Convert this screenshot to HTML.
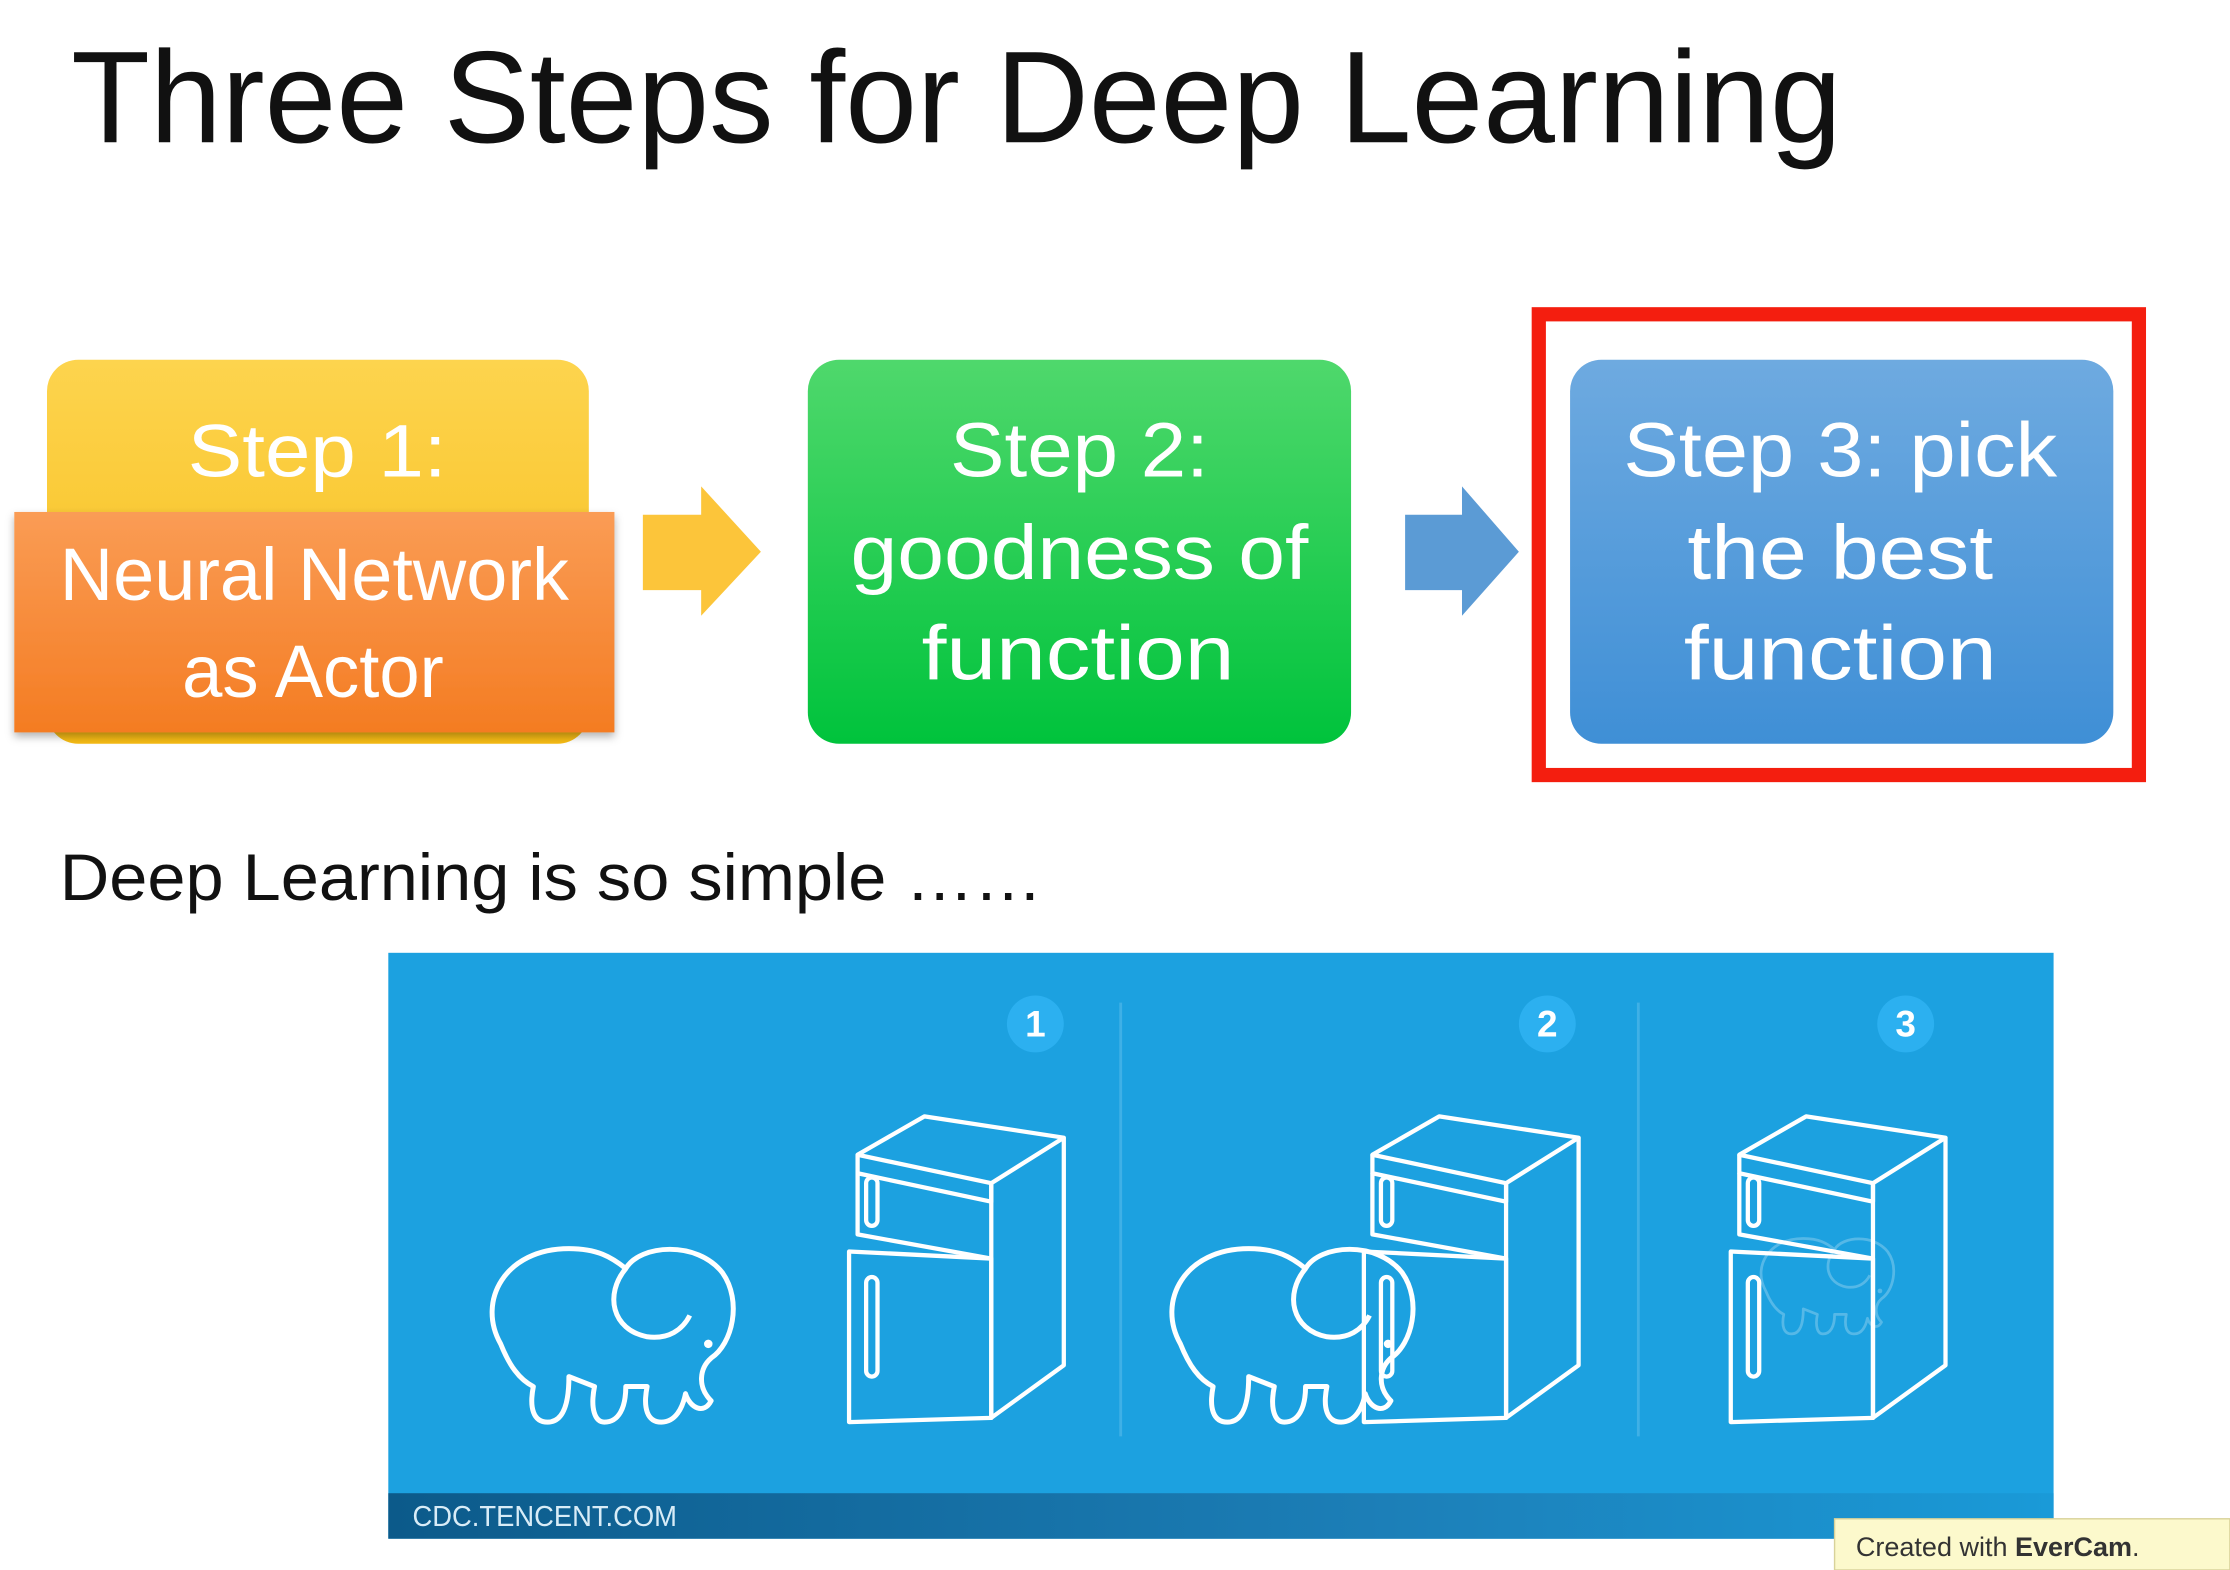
<!DOCTYPE html>
<html><head><meta charset="utf-8"><style>
html,body{margin:0;padding:0;background:#fff;width:2230px;height:1570px;overflow:hidden}
svg{display:block}
text{font-family:"Liberation Sans",sans-serif}
</style></head><body>
<svg width="2230" height="1570" viewBox="0 0 1568 1104" xmlns="http://www.w3.org/2000/svg">
<defs>
<linearGradient id="gy" x1="0" y1="0" x2="0" y2="1"><stop offset="0" stop-color="#fdd44e"/><stop offset="1" stop-color="#f6bb14"/></linearGradient>
<linearGradient id="go" x1="0" y1="0" x2="0" y2="1"><stop offset="0" stop-color="#fa9c55"/><stop offset="1" stop-color="#f47c22"/></linearGradient>
<linearGradient id="gg" x1="0" y1="0" x2="0" y2="1"><stop offset="0" stop-color="#4fd86c"/><stop offset="1" stop-color="#00c33c"/></linearGradient>
<linearGradient id="gb" x1="0" y1="0" x2="0" y2="1"><stop offset="0" stop-color="#6eaae0"/><stop offset="1" stop-color="#3f8fd6"/></linearGradient>
<linearGradient id="gs" x1="0" y1="0" x2="1" y2="0"><stop offset="0" stop-color="#0c5a8a"/><stop offset="0.6" stop-color="#1c7fb8"/><stop offset="1" stop-color="#1a9ad8"/></linearGradient>
<filter id="sh" x="-10%" y="-10%" width="120%" height="130%"><feDropShadow dx="0" dy="3" stdDeviation="3" flood-opacity="0.3"/></filter>
<g id="fridge" fill="none" stroke="#fff" stroke-width="3" stroke-linejoin="round">
<path d="M603,812 L650,785 L748,800 L697,832 Z"/>
<path d="M603,812 L603,825 L697,845 L697,832"/>
<path d="M697,832 L697,997 L748,960 L748,800"/>
<path d="M603,825 L603,868 L697,885"/>
<path d="M597,880 L697,885 L697,997 L597,1000 Z"/>
<rect x="609" y="828" width="8" height="34" rx="4"/>
<rect x="609" y="898" width="8" height="70" rx="4"/>
</g>
<g id="eleph" fill="none" stroke="#fff" stroke-width="3.5" stroke-linejoin="round">
<path d="M352,945 C335,915 355,878 400,878 C420,878 430,884 440,892 C450,875 490,872 508,895 C522,915 515,945 500,955 C492,962 490,975 500,985 C495,995 485,990 482,980 C480,990 475,1000 465,1000 C455,1000 452,990 455,975 L440,975 C440,990 435,1000 425,1000 C418,1000 415,990 418,975 L400,968 C400,985 397,1000 385,1000 C375,1000 372,990 375,975 C365,970 358,960 352,945 Z"/>
<path d="M440,892 C425,910 430,935 455,940 C470,942 480,935 485,925"/>
<circle cx="498" cy="945" r="3" fill="#fff" stroke="none"/>
</g>
</defs>

<text x="50" y="100" font-size="92" fill="#111" textLength="1245" lengthAdjust="spacingAndGlyphs">Three Steps for Deep Learning</text>

<rect x="33" y="253" width="381" height="270" rx="22" fill="url(#gy)"/>
<rect x="10" y="360" width="422" height="155" fill="url(#go)" filter="url(#sh)"/>
<g fill="#fff" font-size="52" text-anchor="middle">
<text x="223" y="335" textLength="182" lengthAdjust="spacingAndGlyphs">Step 1:</text>
<text x="221" y="422" textLength="358" lengthAdjust="spacingAndGlyphs">Neural Network</text>
<text x="220" y="490" textLength="184" lengthAdjust="spacingAndGlyphs">as Actor</text>
</g>
<path d="M452,362 L493,362 L493,342 L535,388 L493,433 L493,415 L452,415 Z" fill="#fcc53a"/>

<rect x="568" y="253" width="382" height="270" rx="22" fill="url(#gg)"/>
<g fill="#fff" font-size="54" text-anchor="middle">
<text x="759" y="335" textLength="182" lengthAdjust="spacingAndGlyphs">Step 2:</text>
<text x="759" y="407" textLength="322" lengthAdjust="spacingAndGlyphs">goodness of</text>
<text x="758" y="478" textLength="220" lengthAdjust="spacingAndGlyphs">function</text>
</g>
<path d="M988,362 L1028,362 L1028,342 L1068,388 L1028,433 L1028,415 L988,415 Z" fill="#5b9bd5"/>

<rect x="1082" y="221" width="422" height="324" fill="none" stroke="#f41e0f" stroke-width="10"/>
<rect x="1104" y="253" width="382" height="270" rx="22" fill="url(#gb)"/>
<g fill="#fff" font-size="54" text-anchor="middle">
<text x="1294" y="335" textLength="305" lengthAdjust="spacingAndGlyphs">Step 3: pick</text>
<text x="1294" y="407" textLength="215" lengthAdjust="spacingAndGlyphs">the best</text>
<text x="1294" y="478" textLength="220" lengthAdjust="spacingAndGlyphs">function</text>
</g>

<text x="42" y="633" font-size="46" fill="#111" textLength="691" lengthAdjust="spacingAndGlyphs">Deep Learning is so simple ……</text>

<rect x="273" y="670" width="1171" height="412" fill="#1ca1e0"/>
<rect x="273" y="1050" width="1171" height="32" fill="url(#gs)"/>
<text x="290" y="1073" font-size="20" fill="#d8ecf7" textLength="186" lengthAdjust="spacingAndGlyphs">CDC.TENCENT.COM</text>
<line x1="788" y1="705" x2="788" y2="1010" stroke="#3fb0e6" stroke-width="2"/>
<line x1="1152" y1="705" x2="1152" y2="1010" stroke="#3fb0e6" stroke-width="2"/>
<g font-size="26" font-weight="bold" fill="#fff" text-anchor="middle">
<circle cx="728" cy="720" r="20" fill="#2cb0f0"/><text x="728" y="729">1</text>
<circle cx="1088" cy="720" r="20" fill="#2cb0f0"/><text x="1088" y="729">2</text>
<circle cx="1340" cy="720" r="20" fill="#2cb0f0"/><text x="1340" y="729">3</text>
</g>
<use href="#eleph"/>
<use href="#fridge"/>
<use href="#eleph" transform="translate(478,0)"/>
<use href="#fridge" transform="translate(362,0)"/>
<use href="#fridge" transform="translate(620,0)"/>
<use href="#eleph" transform="translate(1048,388) scale(0.55)" opacity="0.25"/>

<rect x="1290" y="1068" width="278" height="36" fill="#fcf9cc" stroke="#d8d29a" stroke-width="1"/>
<text x="1305" y="1094" font-size="19" fill="#333">Created with <tspan font-weight="bold">EverCam</tspan>.</text>
</svg>
</body></html>
